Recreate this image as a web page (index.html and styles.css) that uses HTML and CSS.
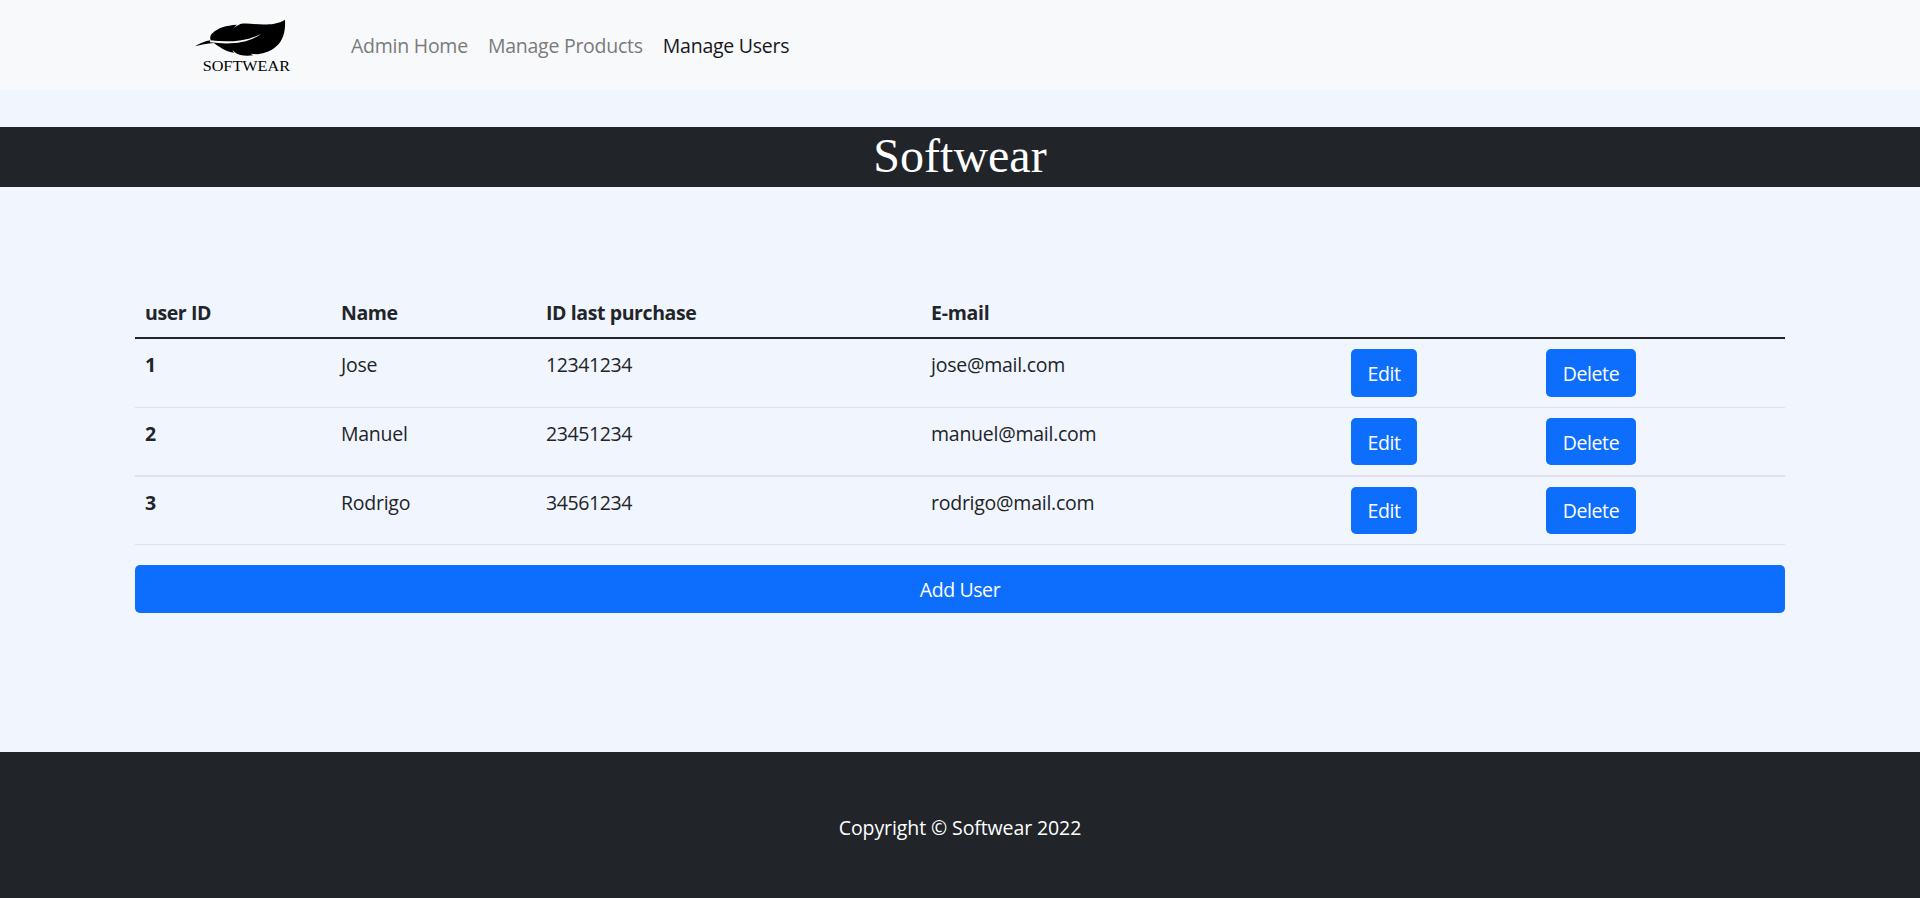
FILE: index.html
```html
<!DOCTYPE html>
<html lang="en">
<head>
<meta charset="utf-8">
<title>Softwear - Manage Users</title>
<link rel="stylesheet" href="styles.css">
</head>
<body>
<nav class="navbar">
  <a class="brand" href="#">
    <svg class="logo" width="130" height="90" viewBox="0 0 390 270" role="img" aria-label="Softwear">
      <path d="M45 139 C58 131 76 123 92 121 C89 112 91 104 99 98 C114 84 137 76 171 74 L161 83 L181 72 C205 68 235 76 268 73 C290 71 302 67 315 59 C317 91 311 119 289 139 C273 154 254 160 233 163 L211 161 L220 166 C196 169 176 166 166 158 L157 149 L162 158 C140 155 119 143 102 129 C82 130 61 134 45 139 Z"/>
      <path class="vein" d="M90 121 C142 127 196 126 244 101 C201 133 145 134 90 127 Z"/>
      <text x="68" y="212" textLength="262" lengthAdjust="spacingAndGlyphs">SOFTWEAR</text>
    </svg>
  </a>
  <ul class="nav-links">
    <li><a class="nav-link" href="#">Admin Home</a></li>
    <li><a class="nav-link" href="#">Manage Products</a></li>
    <li><a class="nav-link active" href="#">Manage Users</a></li>
  </ul>
</nav>
<header class="banner"><h1>Softwear</h1></header>
<main class="content">
  <table class="users">
    <colgroup><col class="c-id"><col class="c-name"><col class="c-purchase"><col class="c-mail"><col class="c-edit"><col></colgroup>
    <thead><tr><th>user ID</th><th>Name</th><th>ID last purchase</th><th class="mail">E-mail</th><th></th><th></th></tr></thead>
    <tbody>
      <tr><th>1</th><td class="name">Jose</td><td>12341234</td><td class="mail">jose@mail.com</td><td class="action"><button class="btn edit">Edit</button></td><td class="action"><button class="btn delete">Delete</button></td></tr>
      <tr class="thick"><th>2</th><td class="name">Manuel</td><td>23451234</td><td class="mail">manuel@mail.com</td><td class="action"><button class="btn edit">Edit</button></td><td class="action"><button class="btn delete">Delete</button></td></tr>
      <tr><th>3</th><td class="name">Rodrigo</td><td>34561234</td><td class="mail">rodrigo@mail.com</td><td class="action"><button class="btn edit">Edit</button></td><td class="action"><button class="btn delete">Delete</button></td></tr>
    </tbody>
  </table>
  <button class="btn add">Add User</button>
</main>
<footer class="footer"><p>Copyright © Softwear 2022</p></footer>
</body>
</html>
```
FILE: styles.css
```css
* { box-sizing: border-box; }
body {
  margin: 0;
  height: 898px;
  overflow: hidden;
  display: flex;
  flex-direction: column;
  background: #f1f5fd;
  color: #212529;
  font: 400 19.5px/30px "Open Sans", "Noto Sans", sans-serif;
  letter-spacing: -0.4px;
}
.navbar {
  height: 90px;
  flex: none;
  display: flex;
  padding-left: 180px;
  background: #f8f9fa;
}
.brand { display: block; width: 130px; height: 90px; }
.logo { display: block; fill: #000; }
.logo .vein { fill: #f8f9fa; }
.logo text { font: 45px "Liberation Serif", serif; letter-spacing: 0; }
.nav-links {
  display: flex;
  align-items: center;
  gap: 20px;
  margin: 0 0 0 41px;
  padding: 0;
  height: 92px;
  list-style: none;
  letter-spacing: -0.25px;
}
.nav-link { color: #7a7b7c; text-decoration: none; }
.nav-link.active { color: #17181a; }
.banner {
  height: 60px;
  flex: none;
  margin-top: 37px;
  background: #212529;
  color: #fff;
  text-align: center;
}
.banner h1 {
  margin: 0;
  font: 400 48px/57px "Liberation Serif", serif;
  letter-spacing: 0;
}
.content {
  flex: 1;
  padding: 101px 135px 0;
}
.users {
  width: 1650px;
  table-layout: fixed;
  border-collapse: separate;
  border-spacing: 0;
  text-align: left;
}
.c-id { width: 196px; }
.c-name { width: 205px; }
.c-purchase { width: 385px; }
.c-mail { width: 420px; }
.c-edit { width: 195px; }
.users th, .users td { padding: 10px; vertical-align: top; }
.users th { font-weight: 700; }
.users thead th { height: 51px; padding-bottom: 9px; border-bottom: 2px solid #212529; }
.users tbody th, .users tbody td { height: 69px; padding: 11px 10px 9px; border-bottom: 1px solid #dee2e6; }
.users tbody .action { padding-top: 10px; }
.users tbody .thick th, .users tbody .thick td { border-bottom-width: 2px; }
.users tbody tr:last-child th, .users tbody tr:last-child td { height: 68px; }
.users .mail { letter-spacing: -0.25px; }
.users .name { letter-spacing: -0.25px; }
.btn {
  display: block;
  height: 48px;
  padding: 1px 0 0;
  border: 0;
  border-radius: 5px;
  background: #0d6efd;
  color: #fff;
  font: inherit;
  letter-spacing: -0.4px;
}
.thick .btn, tr:last-child .btn { height: 47px; }
.thick .btn { padding-top: 2px; }
.edit { width: 66px; }
.delete { width: 90px; }
.add { width: 100%; margin-top: 20px; }
.footer {
  height: 146px;
  flex: none;
  padding-top: 61px;
  background: #212529;
  color: #fff;
  text-align: center;
  letter-spacing: -0.1px;
}
.footer p { margin: 0; }
```
